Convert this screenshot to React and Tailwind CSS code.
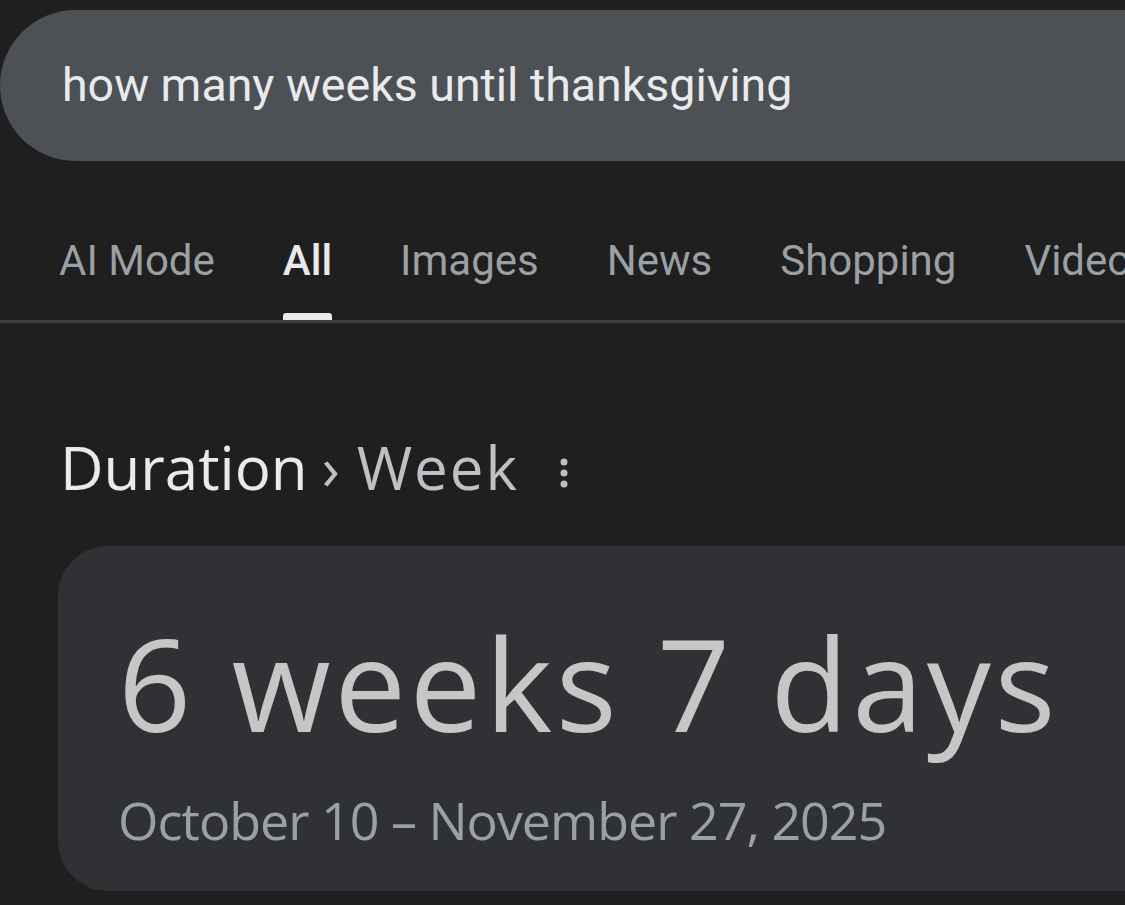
const tabs = ["AI Mode", "All", "Images", "News", "Shopping", "Videos"];

const App = () => {
  return (
    <div className="w-[1125px] h-[905px] overflow-hidden bg-[#1f1f1f]">
      <div className="pt-[10px]">
        <div className="h-[151px] w-full rounded-l-[76px] bg-[#4d5156] flex items-center pl-[62px]">
          <span className="text-[46.5px] text-[#e8eaed] whitespace-nowrap" style={{ fontFamily: "Roboto, 'Liberation Sans', sans-serif" }}>
            how many weeks until thanksgiving
          </span>
        </div>
      </div>

      <div className="border-b-[3px] border-[#3c4043] flex gap-[68px] pl-[59px] pt-[75px] whitespace-nowrap" style={{ fontFamily: "Roboto, 'Liberation Sans', sans-serif" }}>
        {tabs.map(t => (
          <div key={t} className="flex flex-col items-center">
            <span className={`text-[42px] leading-[50px] ${t === "All" ? "text-[#e8eaed] font-medium" : "text-[#9aa0a6]"}`}>{t}</span>
            <div className={`mt-[27px] h-[7px] w-full rounded-t-[3px] ${t === "All" ? "bg-[#e8eaed]" : "bg-transparent"}`}></div>
          </div>
        ))}
      </div>

      <div className="pl-[60px] pt-[109px] flex items-center" style={{ fontFamily: "'Open Sans', sans-serif" }}>
        <span className="text-[60px] leading-[70px] text-[#e8eaed]">Duration</span>
        <span className="text-[60px] leading-[70px] text-[#bdc1c6] ml-[14px]">›</span>
        <span className="text-[60px] leading-[70px] text-[#bdc1c6] ml-[17px] tracking-[2px]">Week</span>
        <svg className="ml-[40px] mt-[12px]" width="10" height="32" viewBox="0 0 10 32">
          <circle cx="5" cy="5" r="3.5" fill="#bdc1c6" />
          <circle cx="5" cy="16" r="3.5" fill="#bdc1c6" />
          <circle cx="5" cy="27" r="3.5" fill="#bdc1c6" />
        </svg>
      </div>

      <div className="ml-[58px] mt-[44px] h-[345px] rounded-l-[50px] bg-[#303134] pl-[60px] pt-[62px]" style={{ fontFamily: "'Open Sans', sans-serif" }}>
        <div className="text-[128px] leading-[150px] tracking-[3.5px] text-[#c4c7c5] whitespace-nowrap">6 weeks 7 days</div>
        <div className="mt-[32px] text-[52px] leading-[60px] tracking-[-1px] text-[#9aa0a6] whitespace-nowrap">October 10 – November 27, 2025</div>
      </div>
    </div>
  );
};

export default App;
